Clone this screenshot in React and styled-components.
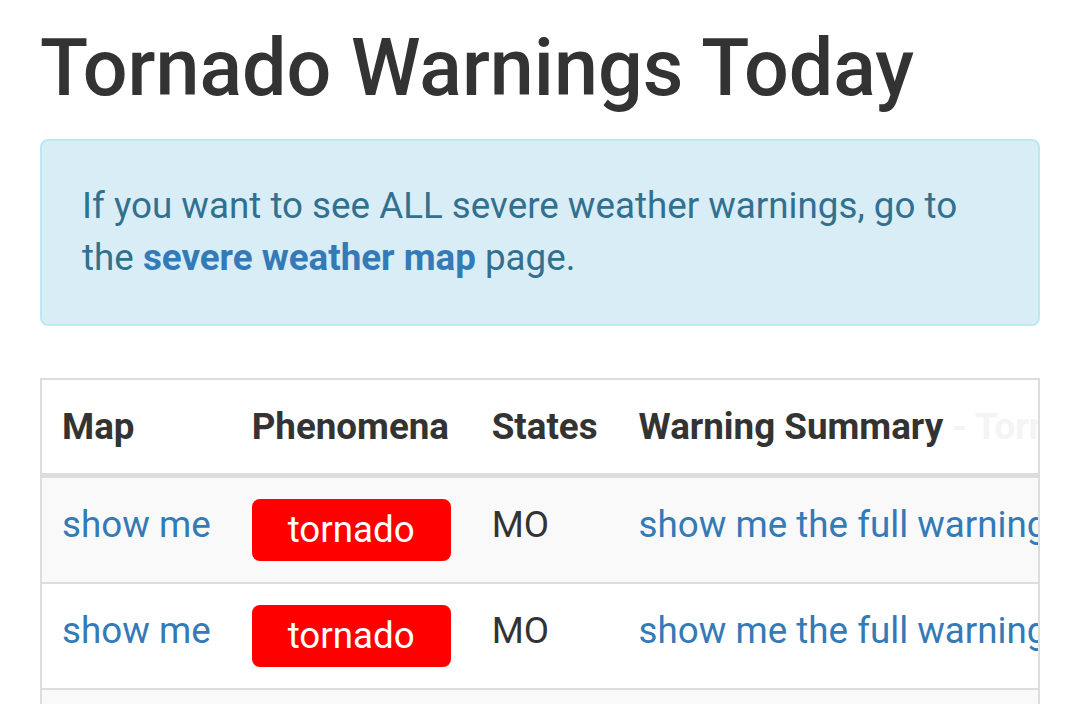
import React from "react";
import styled, {createGlobalStyle} from "styled-components";

const Global = createGlobalStyle`
  *, *::before, *::after {
    box-sizing: border-box;
  }
  html, body {
    margin: 0;
    padding: 0;
    overflow: hidden;
    background: #fff;
  }
  body {
    font-family: Roboto, "Liberation Sans", Arial, sans-serif;
    font-size: 36.75px;
    line-height: 1.42857;
    color: #333;
  }
`;

const Page = styled.div`
  padding: 25px 34px 0 40px;
`;

const Title = styled.h1`
  margin: 0 0 27px 0;
  font-size: 79px;
  font-weight: 500;
  line-height: 1.1;
  color: #333;
`;

const Alert = styled.div`
  padding: 39px 40px;
  margin-bottom: 52px;
  background-color: #d9edf7;
  border: 2px solid #bce8f1;
  border-radius: 8px;
  color: #31708f;

  a {
    color: #337ab7;
    font-weight: 700;
    text-decoration: none;
  }
`;

const TableWrap = styled.div`
  width: 100%;
  overflow: hidden;
  border: 2px solid #ddd;
  border-bottom: none;
`;

const Table = styled.table`
  border-collapse: collapse;
  border-spacing: 0;
  white-space: nowrap;
`;

const Th = styled.th`
  text-align: left;
  font-weight: 700;
  padding: 21px 21px 20px 20px;
  line-height: 52px;
  border-bottom: 5px solid #ddd;

  span {
    color: #f4f4f4;
    font-weight: 700;
  }
`;

const Row = styled.tr`
  background-color: ${p => (p.$odd ? "#f9f9f9" : "#fff")};
`;

const Td = styled.td`
  padding: 21px 21px 21px 20px;
  line-height: 52px;
  vertical-align: top;
  border-bottom: 2px solid #ddd;

  a {
    color: #337ab7;
    text-decoration: none;
  }
`;

const Badge = styled.span`
  display: inline-block;
  padding: 5px 36px;
  background-color: #ff0000;
  color: #fff;
  border-radius: 8px;
  line-height: 52px;
`;

const warnings = [
    {state: "MO"},
    {state: "MO"},
    {state: "KS"},
];

export default function App() {
    return (
        <Page>
            <Global/>
            <Title>Tornado Warnings Today</Title>
            <Alert>
                If you want to see ALL severe weather warnings, go to the{" "}
                <a href="#">severe weather map</a> page.
            </Alert>
            <TableWrap>
                <Table>
                    <thead>
                    <tr>
                        <Th>Map</Th>
                        <Th>Phenomena</Th>
                        <Th>States</Th>
                        <Th>Warning Summary <span>- Tornado Warning issued for</span></Th>
                    </tr>
                    </thead>
                    <tbody>
                    {warnings.map((w, i) => (
                        <Row key={i} $odd={i % 2 === 0}>
                            <Td><a href="#">show me</a></Td>
                            <Td><Badge>tornado</Badge></Td>
                            <Td>{w.state}</Td>
                            <Td><a href="#">show me the full warning text</a></Td>
                        </Row>
                    ))}
                    </tbody>
                </Table>
            </TableWrap>
        </Page>
    );
}
